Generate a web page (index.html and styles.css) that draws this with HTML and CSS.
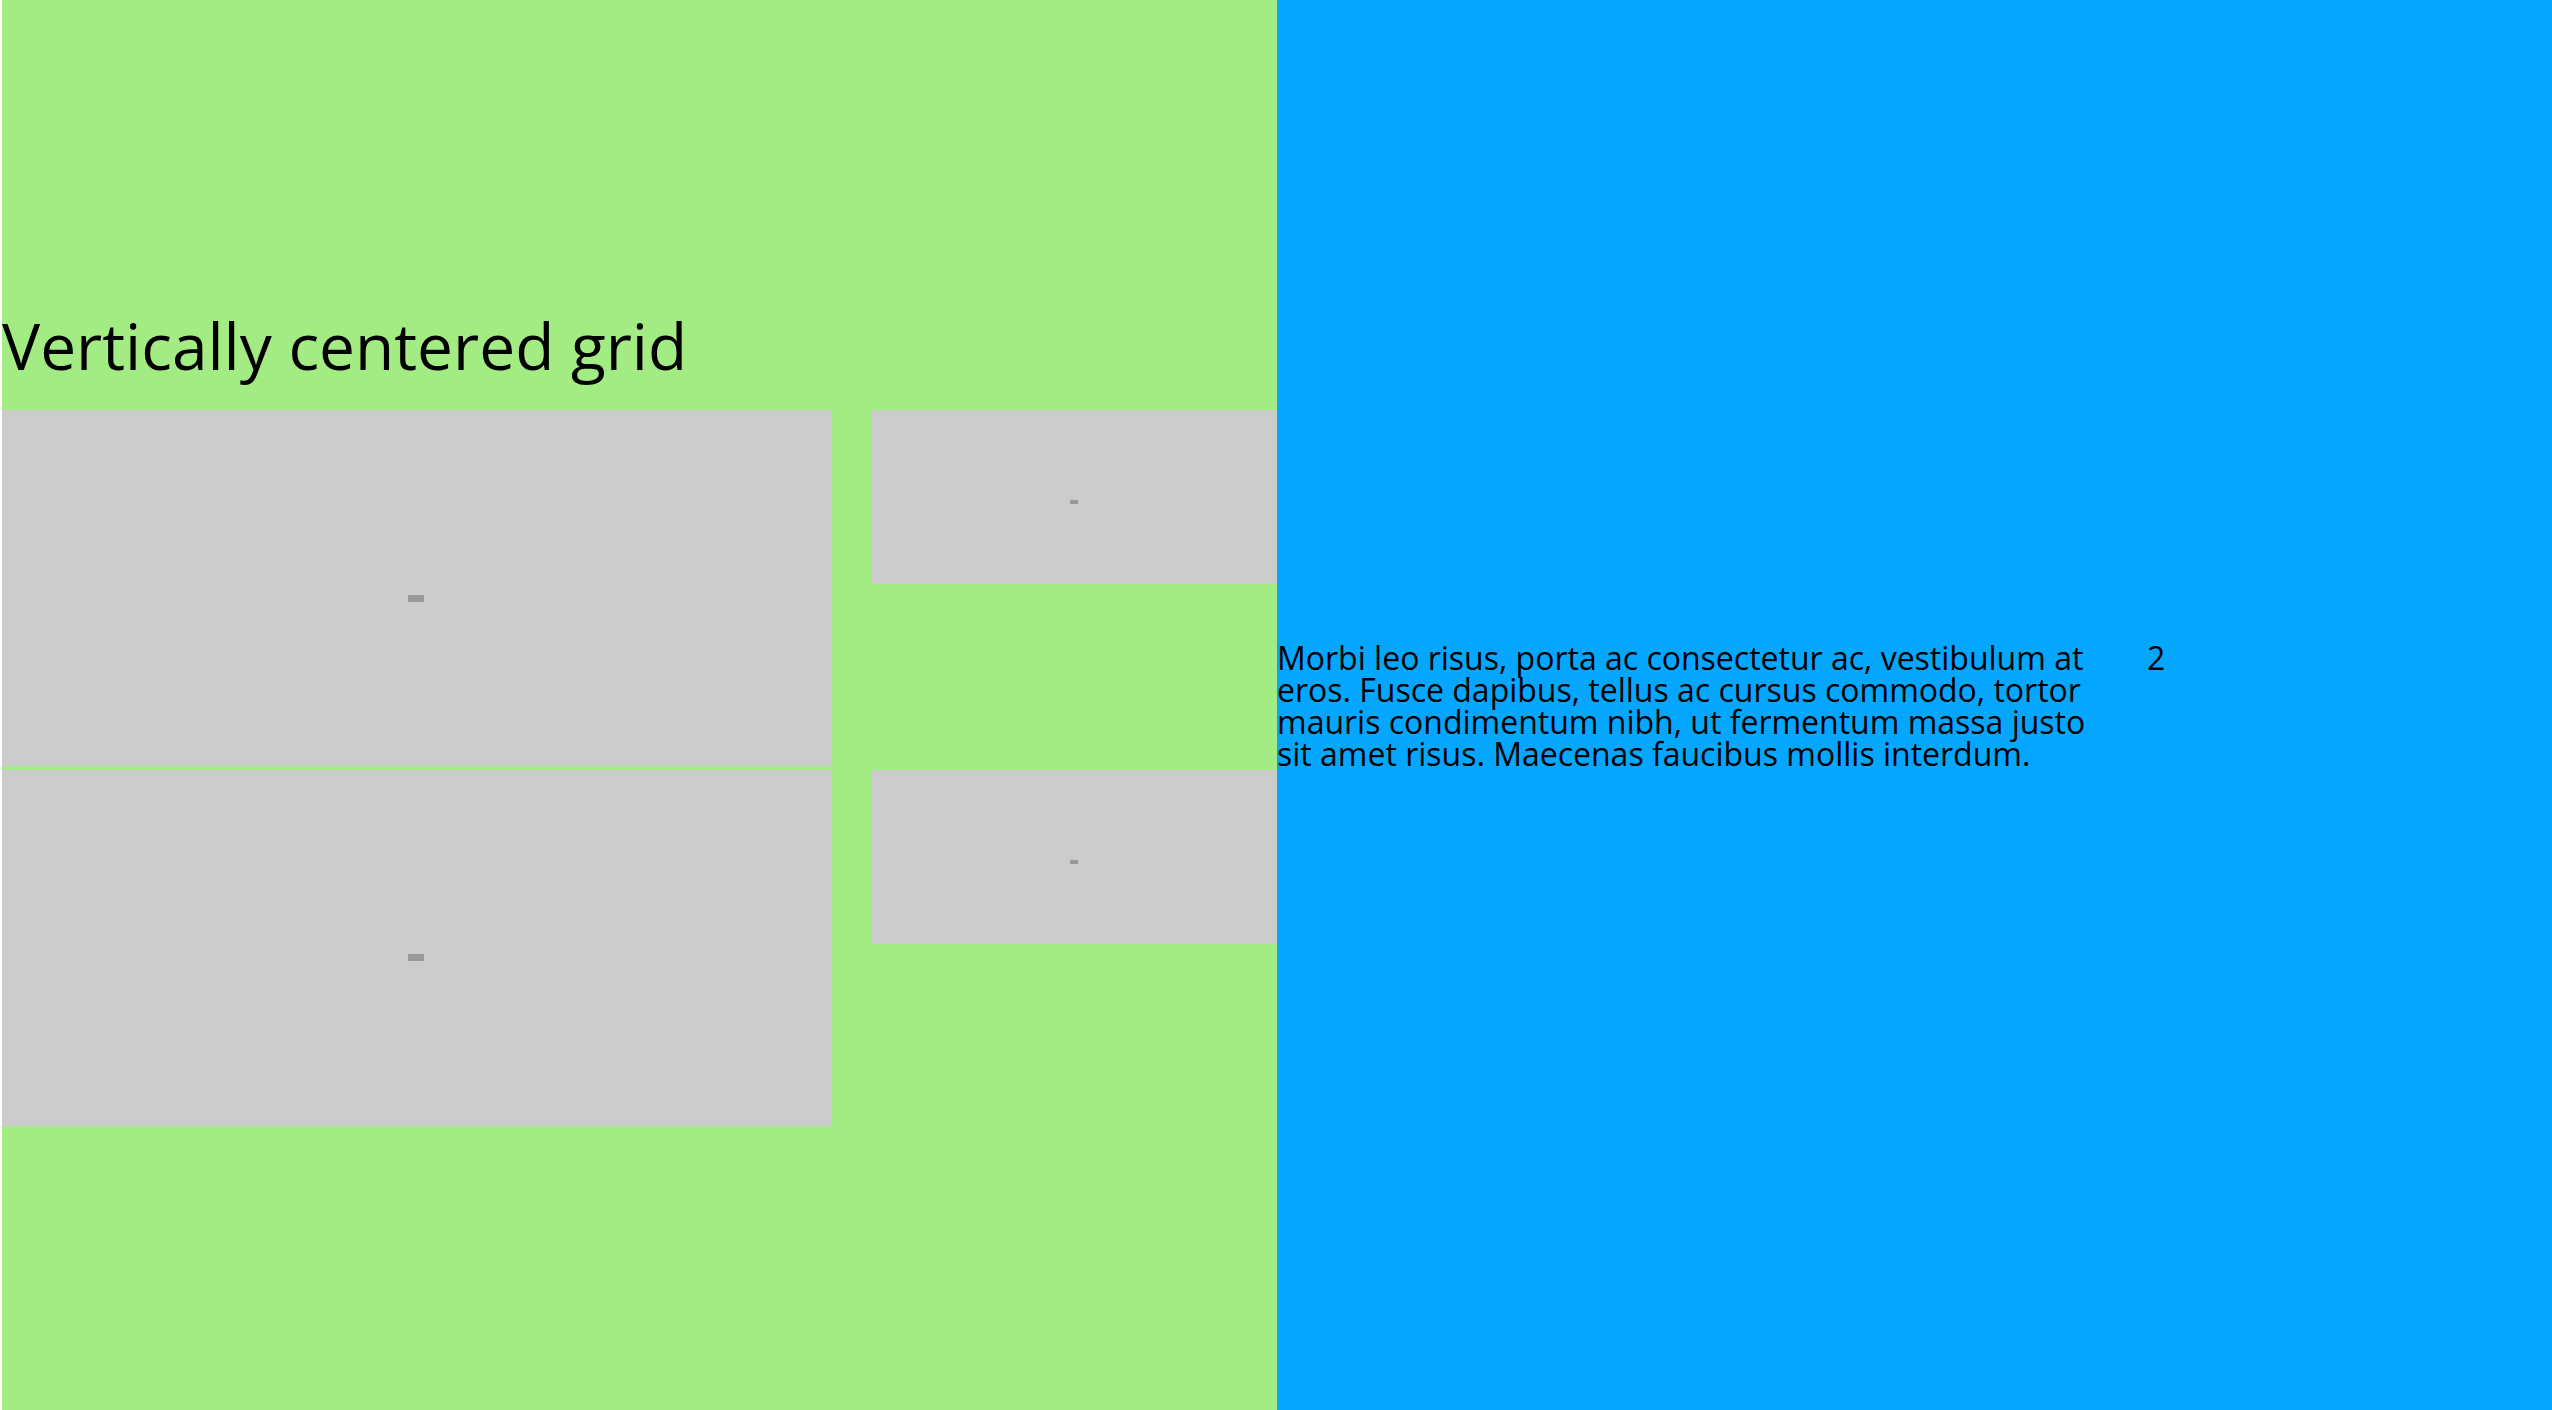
FILE: index.html
```html
<!DOCTYPE html>
<html lang="en">
<head>
<meta charset="utf-8">
<title>Vertically centered grid</title>
<link rel="stylesheet" href="styles.css">
</head>
<body>
<div class="page">
  <section class="panel panel-green">
    <div class="content">
      <h1 class="title">Vertically centered grid</h1>
      <div class="grid">
        <div class="box"><span class="mark mark-lg"></span></div>
        <div class="box"><span class="mark mark-sm"></span></div>
        <div class="box"><span class="mark mark-lg"></span></div>
        <div class="box"><span class="mark mark-sm"></span></div>
      </div>
    </div>
  </section>
  <section class="panel panel-blue">
    <div class="text-grid">
      <p class="para">Morbi leo risus, porta ac consectetur ac, vestibulum at eros. Fusce dapibus, tellus ac cursus commodo, tortor mauris condimentum nibh, ut fermentum massa justo sit amet risus. Maecenas faucibus mollis interdum.</p>
      <div class="num">2</div>
    </div>
  </section>
</div>
</body>
</html>
```

FILE: styles.css
```css
html, body {
  margin: 0;
  padding: 0;
  background: #ffffff;
}

body {
  font-family: "Open Sans", "Liberation Sans", sans-serif;
  color: #000;
  font-size: 32px;
  line-height: 32px;
}

.page {
  display: flex;
  height: 1410px;
  padding-left: 2px;
  overflow: hidden;
}

.panel {
  flex: 0 0 1275px;
  width: 1275px;
  height: 1410px;
  display: flex;
  flex-direction: column;
  justify-content: center;
}

.panel-green {
  background: #a3ec84;
}

.panel-blue {
  background: #05a7fe;
}

.content {
  width: 1275px;
}

.title {
  font-size: 64px;
  font-weight: 400;
  line-height: 36px;
  margin: 44px 0 46px;
}

.grid {
  display: grid;
  grid-template-columns: 830px 405px;
  column-gap: 40px;
  row-gap: 4px;
  align-items: start;
}

.box {
  background: #cccccc;
  aspect-ratio: 7 / 3;
  display: flex;
  align-items: center;
  justify-content: center;
}

.mark {
  display: block;
  background: #999999;
  filter: blur(0.6px);
}

.mark-lg {
  width: 16px;
  height: 7px;
  margin-top: 20px;
  margin-right: 3px;
}

.mark-sm {
  width: 8px;
  height: 4px;
  margin-top: 10px;
  margin-right: 2px;
}

.text-grid {
  display: grid;
  grid-template-columns: 830px 405px;
  column-gap: 40px;
  align-items: start;
  padding-top: 2px;
}

.para {
  margin: 0;
}

.num {
  margin: 0;
}
```
